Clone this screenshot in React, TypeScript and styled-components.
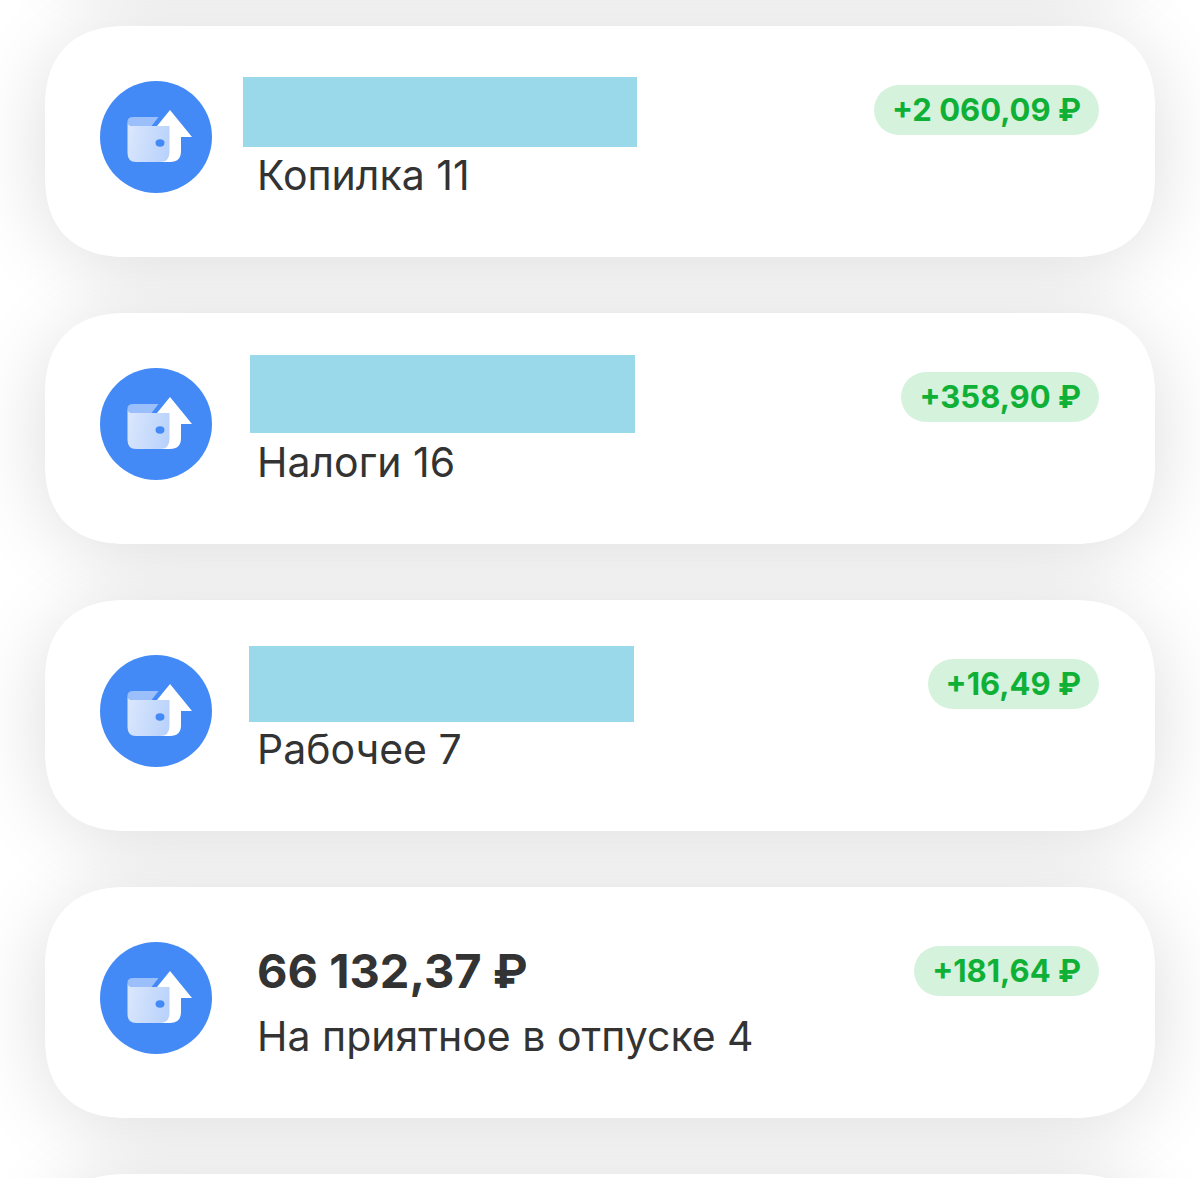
import React from "react";
import styled, { createGlobalStyle } from "styled-components";

const GlobalStyle = createGlobalStyle`
  *, *::before { box-sizing: border-box; }
  html { overflow: hidden; height: 100%; }
  body {
    margin: 0;
    height: 100%;
    overflow: hidden;
    background: #fff;
    color: #333;
    font-family: Inter, "Noto Sans", sans-serif;
  }
`;

const Screen = styled.main`
  overflow: hidden;
  height: 100vh;
`;

const List = styled.ul`
  isolation: isolate;
  display: flex;
  flex-direction: column;
  gap: 56px;
  margin: -261px 0 0;
  padding: 0 45px;
  list-style: none;
`;

const Card = styled.li`
  --radius: 72px;
  position: relative;
  display: flex;
  align-items: flex-start;
  min-height: 231px;
  padding: 52px 56px 0 55px;
  border-radius: var(--radius);
  background: #fff;

  /* The shadow lies under every card, so it never darkens a neighbour. */
  &::before {
    content: "";
    position: absolute;
    z-index: -1;
    inset: 0;
    border-radius: var(--radius);
    box-shadow: 0 8px 80px rgba(0, 0, 0, 0.14);
  }

  @supports (corner-shape: superellipse(1.2)) {
    --radius: 82px;
    corner-shape: superellipse(1.25);
  }
`;

const Icon = styled.svg`
  flex: none;
  width: 112px;
  height: 112px;
  margin-top: 3px;
`;

const Details = styled.div`
  flex: 1;
  min-width: 0;
  margin-left: 45px;
`;

const Amount = styled.p`
  display: flex;
  align-items: center;
  height: 64px;
  margin: 0;
  font-size: 47px;
  font-weight: 700;
  line-height: 64px;
`;

const Mask = styled.span<{ $width: number; $height: number; $left: number; $top: number }>`
  flex: none;
  align-self: flex-start;
  width: ${(p) => p.$width}px;
  height: ${(p) => p.$height}px;
  margin: ${(p) => p.$top}px 0 0 ${(p) => p.$left}px;
  background: #99d9ea;
`;

const Name = styled.h2`
  margin: 5px 0 0;
  font-size: 41px;
  font-weight: 400;
  line-height: 56px;
`;

const Badge = styled.span`
  margin-top: 7px;
  padding: 0 18px;
  border-radius: 25px;
  background: #d5f2dd;
  color: #0fb036;
  font-size: 31px;
  font-weight: 700;
  line-height: 50px;
  white-space: nowrap;
`;

type MaskBox = { width: number; height: number; left: number; top: number };
type Account = { name: string; gain: string; amount?: string; mask?: MaskBox };

const accounts: Account[] = [
  { name: "Копилка 11", gain: "+2 060,09 ₽", mask: { width: 394, height: 70, left: -14, top: -1 } },
  { name: "Налоги 16", gain: "+358,90 ₽", mask: { width: 385, height: 78, left: -7, top: -10 } },
  { name: "Рабочее 7", gain: "+16,49 ₽", mask: { width: 385, height: 76, left: -8, top: -6 } },
  { name: "На приятное в отпуске 4", gain: "+181,64 ₽", amount: "66 132,37 ₽" },
];

function WalletIcon({ id }: { id: string }) {
  return (
    <Icon viewBox="0 0 112 112" aria-hidden="true">
      <defs>
        <linearGradient id={id} x1="0" x2="1" y1="0.4" y2="0.6">
          <stop offset="0" stopColor="#d9e6fd" />
          <stop offset="1" stopColor="#b9d2fb" />
        </linearGradient>
      </defs>
      <circle cx="56" cy="56" r="56" fill="#448af7" />
      <path d="M57 45L70 29L92 56H81V70Q81 81 70 81H60V45Z" fill="#fff" />
      <path d="M27.500 41Q28 45 34 45H69.500V71Q69.500 81 60 81H36Q27.500 81 27.500 72Z" fill={`url(#${id})`} />
      <path d="M33 36H58.500L51.500 45H33Q27.500 45 27.500 40.500Q27.500 36 33 36Z" fill="#9bbffb" />
      <ellipse cx="60" cy="62" rx="4.500" ry="3.700" fill="#448af7" />
    </Icon>
  );
}

export default function App() {
  return (
    <Screen>
      <GlobalStyle />
      <List>
        <Card aria-hidden="true" />
        {accounts.map((a, i) => (
          <Card key={a.name}>
            <WalletIcon id={`wallet-${i}`} />
            <Details>
              <Amount>
                {a.mask ? (
                  <Mask $width={a.mask.width} $height={a.mask.height} $left={a.mask.left} $top={a.mask.top} />
                ) : (
                  a.amount
                )}
              </Amount>
              <Name>{a.name}</Name>
            </Details>
            <Badge>{a.gain}</Badge>
          </Card>
        ))}
        <Card aria-hidden="true" />
      </List>
    </Screen>
  );
}
